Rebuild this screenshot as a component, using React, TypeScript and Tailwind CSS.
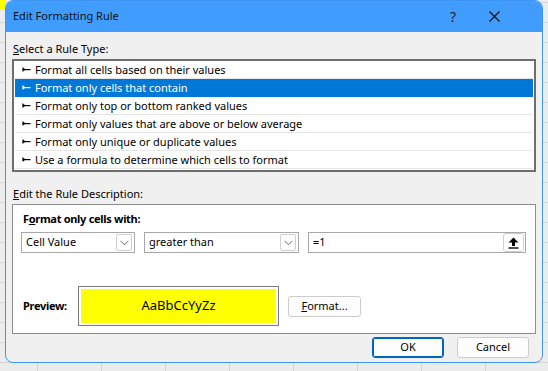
import React from 'react';

const rules = [
  'Format all cells based on their values',
  'Format only cells that contain',
  'Format only top or bottom ranked values',
  'Format only values that are above or below average',
  'Format only unique or duplicate values',
  'Use a formula to determine which cells to format',
];

function RuleArrow({ light }: { light?: boolean }) {
  const c = light ? '#ffffff' : '#000000';
  return (
    <svg width="9" height="7" viewBox="0 0 9 7" className="shrink-0">
      <path d="M0.5 1 L3.5 3.5 L0.5 6 Z" fill={c} />
      <rect x="0.5" y="3" width="8" height="1.2" fill={c} />
    </svg>
  );
}

function Chevron() {
  return (
    <div className="w-[16px] h-[17px] border border-[#cfcfcf] bg-white flex items-center justify-center rounded-[2px]">
      <svg width="9" height="6" viewBox="0 0 9 6">
        <polyline points="0.5,0.8 4.5,4.8 8.5,0.8" fill="none" stroke="#6b6b6b" strokeWidth="1" />
      </svg>
    </div>
  );
}

function Select({ value, width }: { value: string; width: string }) {
  return (
    <div className={`${width} h-[21px] border border-[#a8a8a8] bg-white flex items-center justify-between pl-[4px] pr-[2px]`}>
      <span>{value}</span>
      <Chevron />
    </div>
  );
}

export default function App() {
  return (
    <div
      className="w-[548px] h-[371px] overflow-hidden flex bg-[#ececec] bg-[linear-gradient(to_right,#d4d4d4_1px,transparent_1px),linear-gradient(to_bottom,#d4d4d4_1px,transparent_1px)] bg-size-[64px_20px] bg-position-[37px_2px] text-[11px] text-black"
      style={{ fontFamily: '"Segoe UI", "Noto Sans", sans-serif' }}
    >
      <div className="w-[5px] shrink-0">
        <div className="h-[10px] bg-[#ffff00]" />
      </div>

      <div className="w-[538px] h-[363px] shrink-0 border border-[#3d95f4] rounded-t-[8px] rounded-b-[8px] bg-[#f0f0f0] flex flex-col overflow-hidden">
        {/* title bar */}
        <div className="h-[31px] shrink-0 bg-[#409dfe] flex items-center pl-[7px] pr-[42px]">
          <span className="flex-1 text-[11px] text-[#111]">Edit Formatting Rule</span>
          <span className="text-[14px] text-[#222] mr-[33px]">?</span>
          <svg width="11" height="11" viewBox="0 0 11 11">
            <path d="M0.5 0.5 L10.5 10.5 M10.5 0.5 L0.5 10.5" stroke="#111" strokeWidth="1.2" />
          </svg>
        </div>

        <div className="flex flex-col px-[6px]">
          <div className="mt-[9px] h-[16px] leading-[16px] pl-[1px]">
            <u>S</u>elect a Rule Type:
          </div>

          <div className="mt-[2px] h-[113px] border-2 border-[#6e6e6e] bg-white px-[1px]">
            {rules.map((r, i) => {
              const sel = i === 1;
              return (
                <div
                  key={r}
                  className={`h-[18px] flex items-center gap-[4px] pl-[7px] border-b ${
                    sel ? 'bg-[#0078d7] text-white border-[#0078d7]' : 'border-[#e6e6e6]'
                  }`}
                >
                  <RuleArrow light={sel} />
                  <span className="leading-[16px]">{r}</span>
                </div>
              );
            })}
          </div>

          <div className="mt-[14px] h-[16px] leading-[16px] pl-[1px]">
            <u>E</u>dit the Rule Description:
          </div>

          <div className="mt-[2px] h-[130px] border border-[#8c8c8c] bg-white flex flex-col pl-[8px]">
            <div className="mt-[6px] h-[16px] leading-[16px] font-bold tracking-[-0.3px] ml-[2px]">
              F<u>o</u>rmat only cells with:
            </div>

            <div className="mt-[5px] flex items-center">
              <Select value="Cell Value" width="w-[114px]" />
              <div className="w-[9px]" />
              <Select value="greater than" width="w-[155px]" />
              <div className="w-[9px]" />
              <div className="w-[218px] h-[21px] border border-[#a8a8a8] bg-white flex items-center justify-between pl-[4px] pr-[1px]">
                <span>=1</span>
                <div className="w-[21px] h-[19px] border border-[#cfcfcf] rounded-[3px] bg-white flex items-center justify-center">
                  <svg width="11" height="12" viewBox="0 0 11 12">
                    <path d="M5.5 0.5 L10.5 5.5 L7 5.5 L7 9 L4 9 L4 5.5 L0.5 5.5 Z" fill="#000" />
                    <rect x="0.5" y="10.3" width="10" height="1.4" fill="#000" />
                  </svg>
                </div>
              </div>
            </div>

            <div className="mt-[33px] flex items-center">
              <div className="w-[55px] font-bold tracking-[-0.3px] ml-[2px]">Preview:</div>
              <div className="w-[201px] h-[40px] border border-[#7a7a7a] bg-white p-[2px]">
                <div className="w-full h-full bg-[#ffff00] flex items-center justify-center text-[13px]">
                  AaBbCcYyZz
                </div>
              </div>
              <div className="ml-[9px] w-[73px] h-[21px] border border-[#cccccc] rounded-[3px] bg-[#fdfdfd] flex items-center justify-center">
                <span>
                  <u>F</u>ormat...
                </span>
              </div>
            </div>
          </div>

          <div className="mt-[3px] flex justify-end gap-[13px] pr-[7px]">
            <div className="w-[72px] h-[21px] border border-[#0067c0] rounded-[3px] bg-[#fdfdfd] flex items-center justify-center shadow-[inset_0_0_0_1px_#0067c0]">
              OK
            </div>
            <div className="w-[72px] h-[21px] border border-[#cccccc] rounded-[3px] bg-[#fdfdfd] flex items-center justify-center">
              Cancel
            </div>
          </div>
        </div>
      </div>
    </div>
  );
}
